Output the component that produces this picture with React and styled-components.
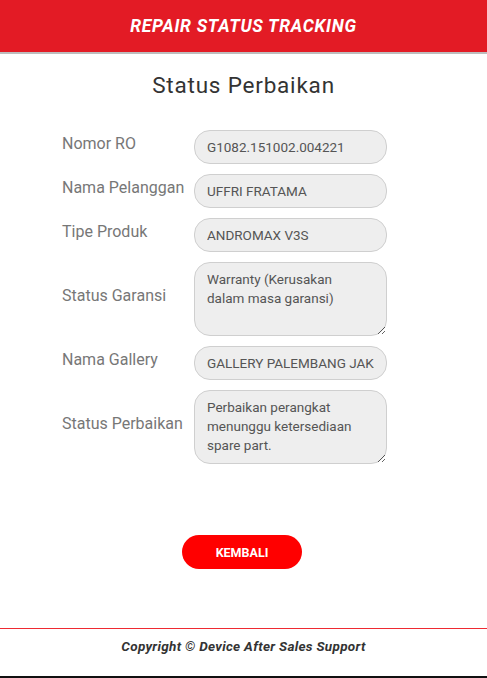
import React from "react";
import styled, { createGlobalStyle } from "styled-components";

const GlobalStyle = createGlobalStyle`
  body {
    margin: 0;
    background: #fff;
    font-family: Roboto, "Liberation Sans", sans-serif;
  }
`;

const Page = styled.div`
  width: 100%;
  min-height: 678px;
  display: flex;
  flex-direction: column;
  box-sizing: border-box;
  border-bottom: 2px solid #111;
`;

const Header = styled.header`
  height: 52px;
  background: #e31b25;
  border-bottom: 2px solid #bdbdbd;
  display: flex;
  align-items: center;
  justify-content: center;
`;

const HeaderTitle = styled.h1`
  margin: 0;
  color: #fff;
  font-size: 17.5px;
  font-weight: 700;
  font-style: italic;
  letter-spacing: 0.7px;
`;

const Title = styled.h2`
  margin: 18px 0 32px;
  text-align: center;
  font-size: 22.5px;
  font-weight: 400;
  color: #333;
  letter-spacing: 0.8px;
`;

const Form = styled.div`
  display: flex;
  flex-direction: column;
  gap: 10px;
  padding-left: 62px;
`;

const Row = styled.div`
  display: flex;
  align-items: center;
`;

const Label = styled.label`
  width: 132px;
  font-size: 16px;
  color: #777;
  margin-top: -8px;
`;

const Field = styled.input`
  width: 193px;
  height: 34px;
  box-sizing: border-box;
  border: 1px solid #cfcfcf;
  border-radius: 16px;
  background: #eee;
  padding: 0 12px;
  font-family: inherit;
  font-size: 13.5px;
  color: #555;
  outline: none;
`;

const Area = styled.textarea`
  width: 193px;
  height: 74px;
  box-sizing: border-box;
  border: 1px solid #cfcfcf;
  border-radius: 16px;
  background: #eee;
  padding: 7px 24px 7px 12px;
  font-family: inherit;
  font-size: 13.5px;
  line-height: 19px;
  color: #555;
  outline: none;
  resize: vertical;
`;

const Actions = styled.div`
  display: flex;
  justify-content: center;
  margin-top: 71px;
  padding-right: 3px;
`;

const BackButton = styled.button`
  width: 120px;
  height: 34px;
  border: none;
  border-radius: 17px;
  background: #ff0000;
  color: #fff;
  font-family: inherit;
  font-weight: 700;
  font-size: 12.5px;
`;

const Footer = styled.footer`
  margin-top: auto;
  padding-bottom: 22px;
  border-top: 1px solid #ee2a32;
`;

const Copyright = styled.p`
  margin: 9px 0 0;
  text-align: center;
  font-size: 13.5px;
  font-weight: 700;
  font-style: italic;
  color: #333;
  letter-spacing: 0.3px;
`;

const fields = [
  { label: "Nomor RO", value: "G1082.151002.004221" },
  { label: "Nama Pelanggan", value: "UFFRI FRATAMA" },
  { label: "Tipe Produk", value: "ANDROMAX V3S" },
  { label: "Status Garansi", value: "Warranty (Kerusakan dalam masa garansi)", multi: true },
  { label: "Nama Gallery", value: "GALLERY PALEMBANG JAKABARING" },
  { label: "Status Perbaikan", value: "Perbaikan perangkat menunggu ketersediaan spare part.", multi: true },
];

export default function App() {
  return (
    <>
      <GlobalStyle />
      <Page>
        <Header>
          <HeaderTitle>REPAIR STATUS TRACKING</HeaderTitle>
        </Header>
        <Title>Status Perbaikan</Title>
        <Form>
          {fields.map((f) => (
            <Row key={f.label}>
              <Label>{f.label}</Label>
              {f.multi ? (
                <Area readOnly value={f.value} />
              ) : (
                <Field readOnly value={f.value} />
              )}
            </Row>
          ))}
        </Form>
        <Actions>
          <BackButton>KEMBALI</BackButton>
        </Actions>
        <Footer>
          <Copyright>Copyright © Device After Sales Support</Copyright>
        </Footer>
      </Page>
    </>
  );
}
